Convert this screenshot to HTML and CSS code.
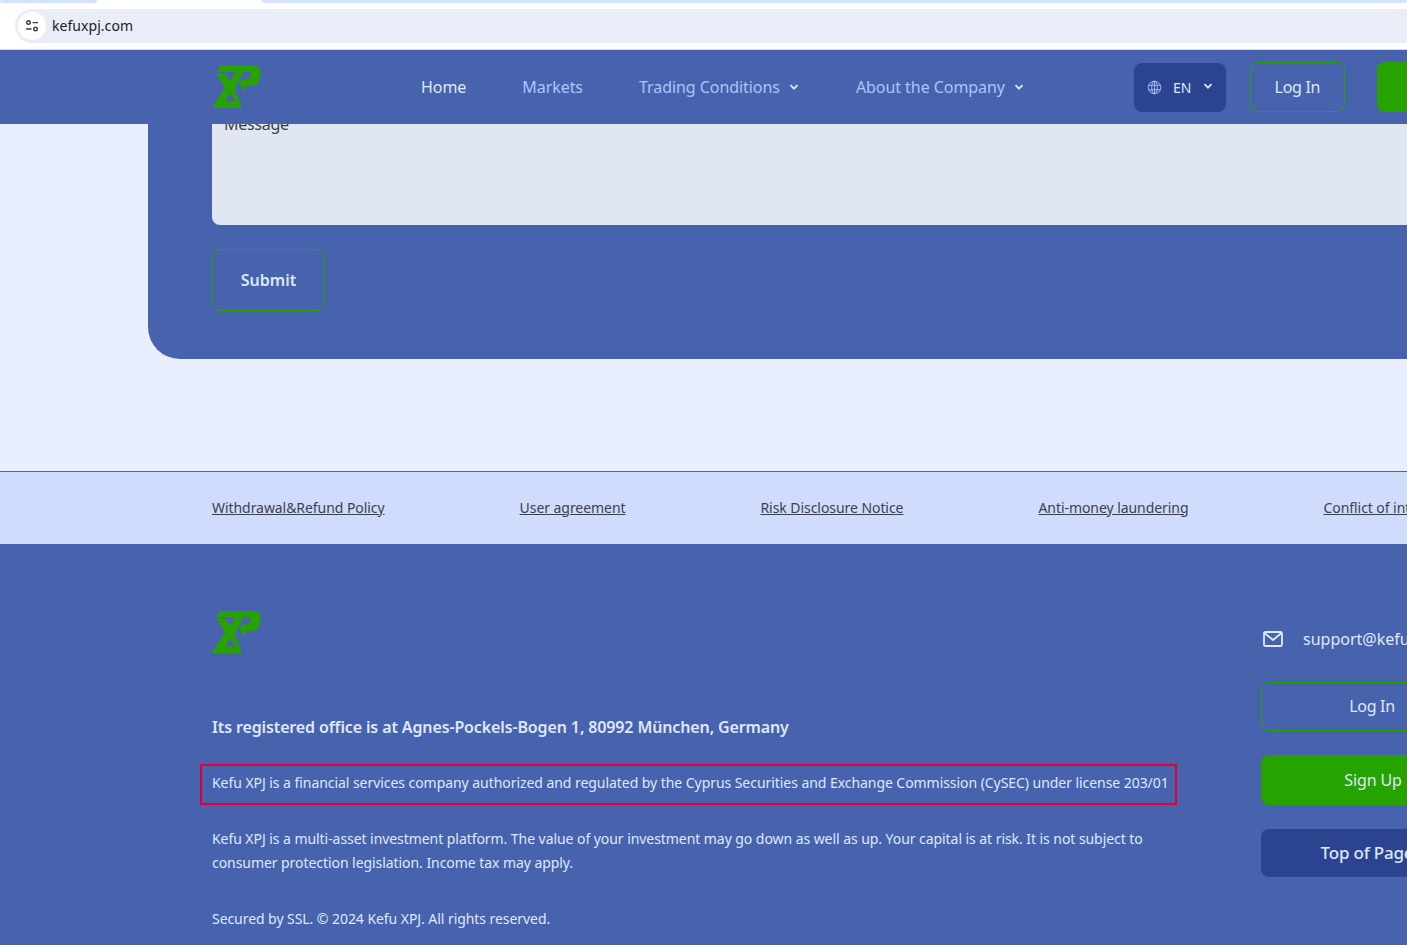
FILE: index.html
```html
<!DOCTYPE html>
<html lang="en">
<head>
<meta charset="utf-8">
<title>Kefu XPJ</title>
<link rel="stylesheet" href="styles.css">
</head>
<body>
<div class="chrome">
  <div class="tabs"><span class="tab tab-a"></span><span class="tab tab-b"></span></div>
  <div class="omnibox">
    <span class="site-icon">
      <svg width="14" height="12" viewBox="0 0 14 12" fill="none" stroke="#3c4043" stroke-width="1.4"><circle cx="3.5" cy="2.6" r="1.8"/><path d="M7.5 2.6H13M1 9H6.5"/><circle cx="10.5" cy="9" r="1.8"/></svg>
    </span>
    <span class="url">kefuxpj.com</span>
  </div>
</div>
<header class="topbar">
  <svg class="logo" viewBox="0 0 48 42"><path class="logo-ink" d="M8 0H43Q48 0 48 5V12Q47 20 38 20H34L31.500 26L27 16L31 13.500H35Q38 13.500 38 10L38.500 6H5Z"/><path class="logo-ink" d="M4 7.500H13L18.500 15L24 5H32L22.500 23L30 42H0L13 21ZM18 27L13.500 35.500H23.500Z"/></svg>
  <nav class="nav">
    <a class="nav-link active">Home</a>
    <a class="nav-link">Markets</a>
    <a class="nav-link">Trading Conditions<svg class="chev" viewBox="0 0 10 6"><path d="M1.500 1.200L5 4.700L8.500 1.200"/></svg></a>
    <a class="nav-link">About the Company<svg class="chev" viewBox="0 0 10 6"><path d="M1.500 1.200L5 4.700L8.500 1.200"/></svg></a>
  </nav>
  <div class="actions">
    <div class="lang">
      <svg class="globe" viewBox="0 0 16 16" fill="none" stroke="#a9c0f5" stroke-width="1"><circle cx="8" cy="8" r="6.700"/><ellipse cx="8" cy="8" rx="3" ry="6.700"/><path d="M1.800 5.600H14.200M1.800 10.400H14.200M8 1.300V14.700"/></svg>
      <span class="lang-code">EN</span>
      <svg class="chev chev-w" viewBox="0 0 10 6"><path d="M1.500 1.200L5 4.700L8.500 1.200"/></svg>
    </div>
    <a class="btn btn-outline btn-head">Log In</a>
    <a class="btn btn-green btn-head">Sign Up</a>
  </div>
</header>
<main class="main">
  <section class="card">
    <div class="field"><span class="placeholder">Message</span></div>
    <a class="btn btn-outline btn-submit">Submit</a>
  </section>
</main>
<div class="legal">
  <a class="legal-link">Withdrawal&amp;Refund Policy</a>
  <a class="legal-link">User agreement</a>
  <a class="legal-link">Risk Disclosure Notice</a>
  <a class="legal-link">Anti-money laundering</a>
  <a class="legal-link">Conflict of interest</a>
</div>
<footer class="footer">
  <div class="foot-left">
    <svg class="logo logo-foot" viewBox="0 0 48 42"><path class="logo-ink" d="M8 0H43Q48 0 48 5V12Q47 20 38 20H34L31.500 26L27 16L31 13.500H35Q38 13.500 38 10L38.500 6H5Z"/><path class="logo-ink" d="M4 7.500H13L18.500 15L24 5H32L22.500 23L30 42H0L13 21ZM18 27L13.500 35.500H23.500Z"/></svg>
    <p class="office">Its registered office is at Agnes-Pockels-Bogen 1, 80992 München, Germany</p>
    <p class="boxed">Kefu XPJ is a financial services company authorized and regulated by the Cyprus Securities and Exchange Commission (CySEC) under license 203/01</p>
    <p class="note">Kefu XPJ is a multi-asset investment platform. The value of your investment may go down as well as up. Your capital is at risk. It is not subject to consumer protection legislation. Income tax may apply.</p>
    <p class="note copy">Secured by SSL. © 2024 Kefu XPJ. All rights reserved.</p>
  </div>
  <div class="foot-right">
    <div class="mail">
      <svg class="mail-icon" viewBox="0 0 20 16" fill="none" stroke="#dfe8fb" stroke-width="1.800"><rect x="1" y="1" width="18" height="14" rx="1.500"/><path d="M1.500 2L10 9L18.500 2"/></svg>
      <span>support@kefuxpj.com</span>
    </div>
    <a class="btn btn-outline btn-foot">Log In</a>
    <a class="btn btn-green btn-foot">Sign Up</a>
    <a class="btn btn-dark btn-foot">Top of Page</a>
  </div>
</footer>
</body>
</html>
```
FILE: styles.css
```css
* { box-sizing: border-box; }
html, body { margin: 0; height: 945px; overflow: hidden; }
body { width: 1407px; background: #e9effe; font-family: "Noto Sans", "Open Sans", sans-serif; color: #dfe8fb; }
a { color: inherit; text-decoration: none; }
p { margin: 0; }

.chrome { height: 50px; background: #fff; border-bottom: 1px solid #d5d9e2; position: relative; }
.tabs { display: flex; height: 3px; gap: 165px; }
.tab { display: block; height: 3px; background: #d3e3fd; border-radius: 0 0 8px 8px; }
.tab-a { width: 97px; }
.tab-b { flex: 1; }
.omnibox { display: flex; align-items: center; height: 34px; margin: 6px 0 0 15px; background: #e9edf7; border-radius: 17px 0 0 17px; padding-left: 3px; }
.site-icon { width: 28px; height: 28px; border-radius: 50%; background: #fff; display: flex; align-items: center; justify-content: center; }
.url { margin: -2px 0 0 6px; font-size: 14px; color: #202124; letter-spacing: 0.05px; }

.topbar { height: 74px; background: #4863ae; display: flex; align-items: center; padding-left: 212px; width: 1600px; position: relative; z-index: 2; }
.logo { width: 48px; height: 42px; display: block; flex: none; }
.logo-ink { fill: #27a300; fill-rule: evenodd; }
.nav { display: flex; align-items: center; gap: 56px; margin-left: 161px; font-size: 16px; color: #a9c6fb; letter-spacing: -0.06px; }
.nav-link { display: flex; align-items: center; }
.nav-link.active { color: #dfe8fb; }
.chev { width: 10px; height: 6px; margin: 0 1px 0 9px; fill: none; stroke: #dfe8fb; stroke-width: 1.800; }
.actions { display: flex; align-items: center; margin-left: 109px; gap: 24px; }
.lang { width: 92px; height: 49px; border-radius: 8px; background: #2c4490; display: flex; align-items: center; padding-left: 13px; font-size: 14px; }
.globe { width: 15px; height: 15px; }
.lang-code { margin-left: 11px; }
.chev-w { margin: -2px 0 0 12px; }

.btn { display: flex; align-items: center; justify-content: center; border-radius: 8px; font-size: 16px; }
.btn-outline { border: 1px solid #27a300; letter-spacing: -0.3px; }
.btn-green { background: #27a300; letter-spacing: -0.15px; }
.btn-dark { background: #2c4490; }
.btn-head { height: 50px; margin-top: -1px; }
.btn-head.btn-outline { width: 95px; }
.btn-head.btn-green { width: 120px; margin-left: 8px; }

.main { height: 347px; padding-left: 148px; }
.card { width: 1500px; height: 235px; background: #4863ae; border-radius: 0 0 0 32px; padding-left: 64px; }
.field { width: 1400px; height: 101px; background: #e1e7f2; border-radius: 0 0 0 8px; padding-left: 12px; overflow: hidden; }
.placeholder { display: block; margin-top: -11px; font-size: 16px; line-height: 22px; color: #3a3f4a; letter-spacing: -0.28px; }
.btn-submit { width: 113px; height: 62px; margin-top: 24px; font-weight: 600; letter-spacing: 0; }

.legal { height: 73px; padding-bottom: 2px; background: #d0dcfb; border-top: 1px solid #5b6272; display: flex; align-items: center; gap: 135px; padding-left: 212px; width: 1700px; font-size: 14px; color: #3b4150; letter-spacing: -0.06px; }
.legal-link { text-decoration: underline; }

.footer { background: #4863ae; height: 401px; display: flex; width: 1700px; padding: 67px 0 0 212px; }
.foot-left { width: 1049px; flex: none; }
.logo-foot { margin-bottom: 62px; }
.office { font-size: 16px; font-weight: 600; line-height: 24px; letter-spacing: -0.125px; }
.boxed { width: 977px; height: 41px; margin: 25px 0 0 -12px; padding-left: 10px; border: 2px solid #e4002b; font-size: 14px; line-height: 33px; white-space: nowrap; letter-spacing: -0.055px; }
.note { width: 960px; margin-top: 22px; font-size: 14px; line-height: 24px; letter-spacing: -0.06px; }
.copy { margin-top: 32px; }
.foot-right { width: 224px; flex: none; display: flex; flex-direction: column; }
.mail { display: flex; align-items: center; gap: 20px; height: 24px; margin-top: 16px; font-size: 16px; white-space: nowrap; }
.mail-icon { width: 20px; height: 16px; flex: none; margin-left: 2px; }
.btn-foot { height: 50px; }
.foot-right .btn-outline { margin-top: 31px; height: 49px; padding: 0 2px 2px 0; }
.foot-right .btn-green { margin-top: 24px; }
.foot-right .btn-dark { margin-top: 24px; height: 48px; font-weight: 500; font-size: 17px; letter-spacing: -0.2px; padding: 0 12px 2px 0; }
```
